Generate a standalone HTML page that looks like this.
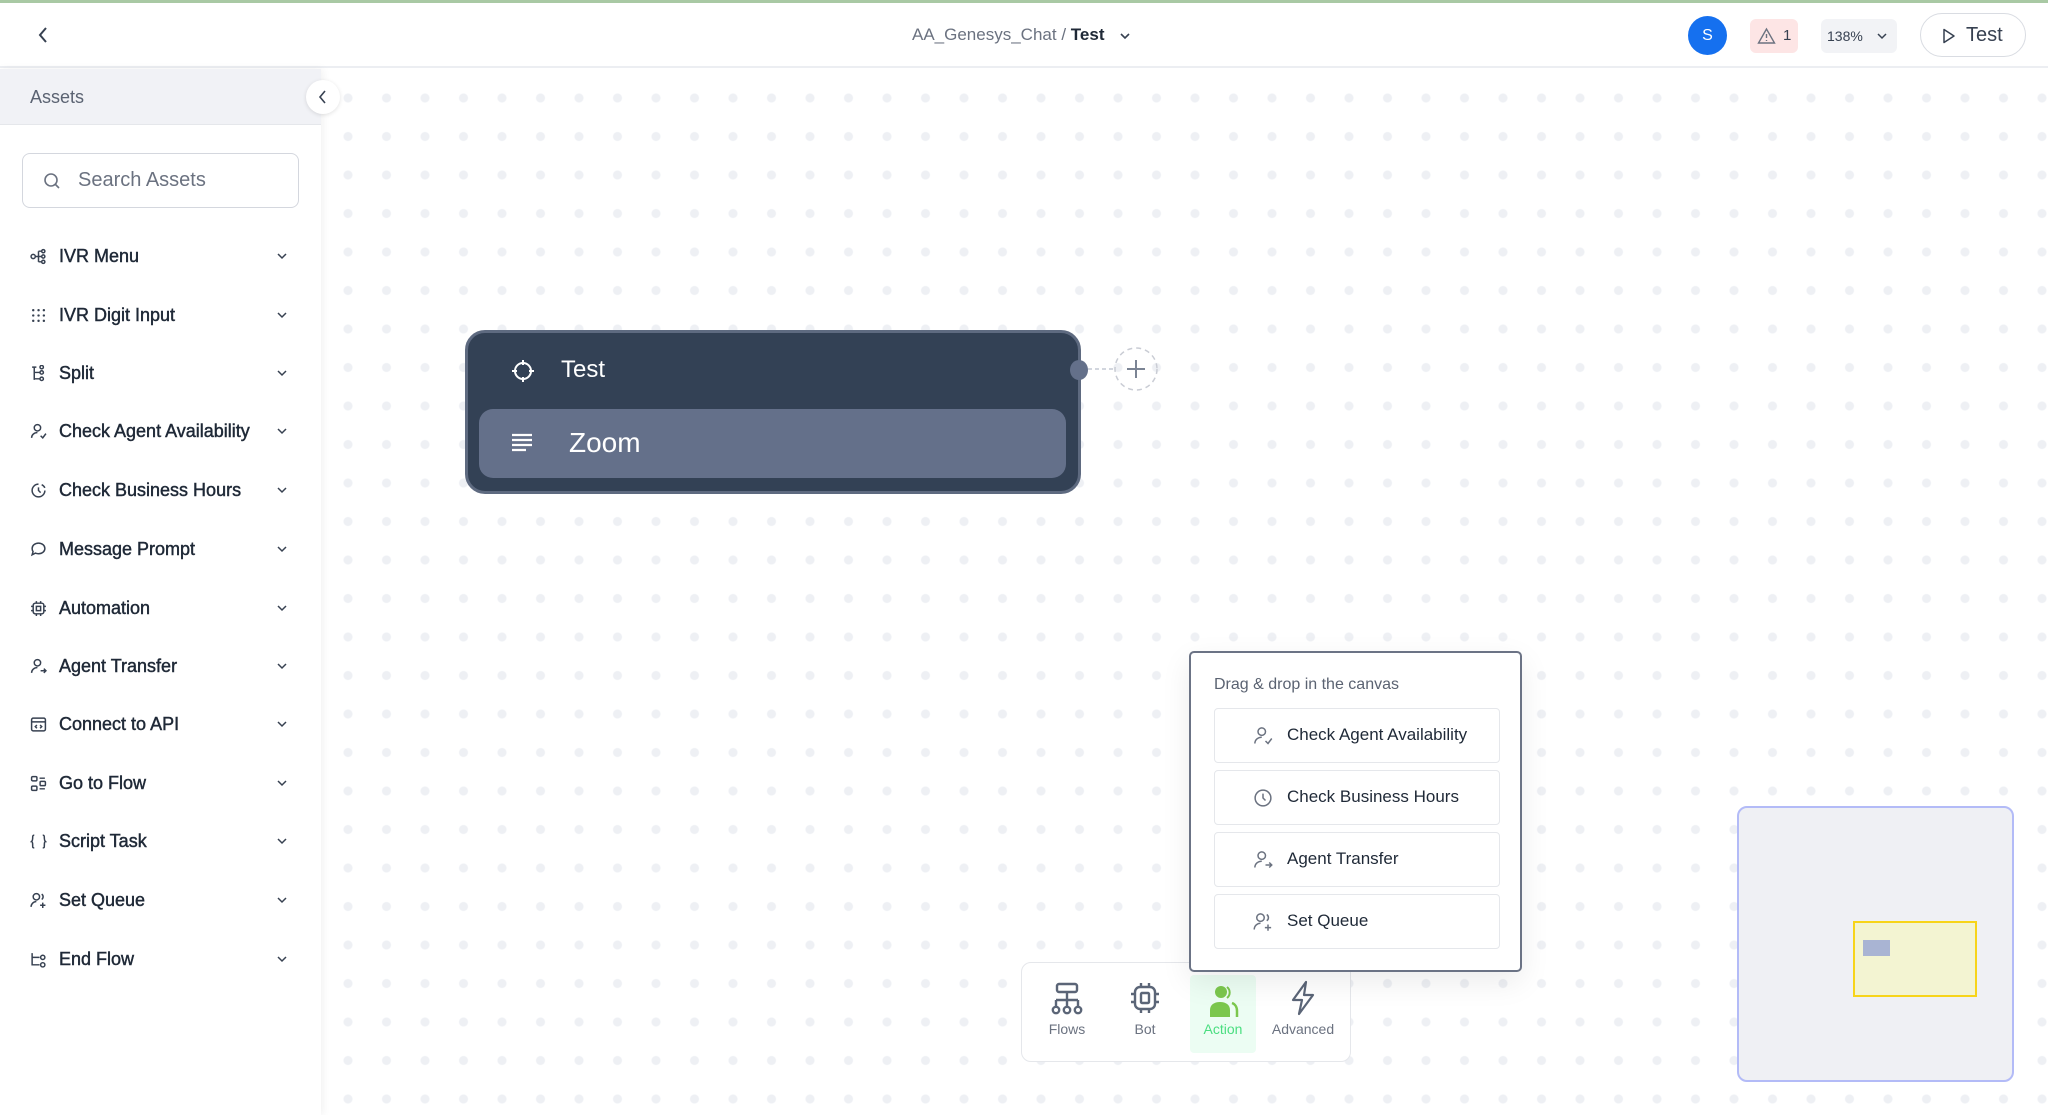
<!DOCTYPE html>
<html><head><meta charset="utf-8"><style>
*{box-sizing:border-box;margin:0;padding:0}
body{width:2048px;height:1115px;overflow:hidden;font-family:"Liberation Sans",sans-serif;background:#fff;position:relative;color:#1f2937}
.topline{position:absolute;left:0;top:0;width:2048px;height:3px;background:#a9c9a4}
.header{position:absolute;left:0;top:3px;width:2048px;height:65px;background:#fff;border-bottom:2px solid #eceef2}
.canvas{position:absolute;left:321px;top:69px;width:1727px;height:1046px;background-color:#fff;background-image:radial-gradient(circle,#eef0f4 4.2px,transparent 4.8px);background-size:38.5px 38.5px;background-position:7.75px 9.75px}
.sidebar{position:absolute;left:0;top:69px;width:321px;height:1046px;background:#fff;box-shadow:2px 0 8px rgba(0,0,0,0.06)}
.ahead{height:56px;background:#f1f2f6;border-bottom:1px solid #e5e7eb;padding-left:30px;line-height:56px;font-size:18px;color:#5b6372}
.search{position:absolute;left:22px;top:84px;width:277px;height:55px;border:1.5px solid #d4d7de;border-radius:8px}
.search span{position:absolute;left:55px;top:15px;font-size:20px;color:#6b7280}
.item{position:absolute;left:0;width:321px;height:30px}
.item .t{position:absolute;left:59px;top:4px;font-size:18px;color:#1f2937;-webkit-text-stroke:0.45px #1f2937}
.item svg.i{position:absolute;left:30px;top:6px}
.item svg.c{position:absolute;left:276px;top:9px}
.node{position:absolute;left:465px;top:330px;width:616px;height:164px;background:#334155;border:3px solid #5e6a80;border-radius:20px}
.pop{position:absolute;left:1189px;top:651px;width:333px;height:321px;background:#fff;border:2px solid #6b7385;border-radius:5px;box-shadow:0 10px 30px rgba(0,0,0,0.08)}
.pi{position:absolute;left:23px;width:286px;height:55px;border:1.5px solid #e5e7eb;border-radius:4px}
.pi span{position:absolute;left:72px;top:16px;font-size:17px;color:#1f2937}
.pi svg{position:absolute;left:38px;top:17px}
.tb{position:absolute;left:1021px;top:962px;width:330px;height:100px;background:#fff;border:1.5px solid #e5e7eb;border-radius:10px}
.tbi{position:absolute;top:0;width:66px;text-align:center}
.tbi div{font-size:14px;color:#6b7280;position:absolute;top:58px;width:100%}
</style></head><body>
<div class="canvas"></div>
<div class="topline"></div>
<div class="header">
<svg style="position:absolute;left:36px;top:22px" width="14" height="20" viewBox="0 0 14 20"><path d="M10 3L4 10l6 7" fill="none" stroke="#374151" stroke-width="2"/></svg>
<div style="position:absolute;left:912px;top:22px;font-size:17px;color:#6b7280">AA_Genesys_Chat <span style="color:#6b7280">/</span> <span style="color:#1f2937;font-weight:bold">Test</span></div>
<svg style="position:absolute;left:1119px;top:28px" width="12" height="10" viewBox="0 0 12 10"><path d="M2 3l4 4 4-4" fill="none" stroke="#374151" stroke-width="1.6"/></svg>
<div style="position:absolute;left:1688px;top:13px;width:39px;height:39px;border-radius:50%;background:#1570ef;color:#fff;font-size:16px;text-align:center;line-height:39px">S</div>
<div style="position:absolute;left:1750px;top:16px;width:48px;height:34px;border-radius:6px;background:#fde5e5"><svg style="position:absolute;left:7px;top:8px" width="19" height="18" viewBox="0 0 19 18"><path d="M9.5 2L1.5 16h16z" fill="none" stroke="#6b7280" stroke-width="1.4"/><path d="M9.5 7v4M9.5 13v1" stroke="#6b7280" stroke-width="1.4"/></svg><span style="position:absolute;left:33px;top:8px;font-size:15px;color:#374151">1</span></div>
<div style="position:absolute;left:1821px;top:16px;width:76px;height:34px;border-radius:6px;background:#f2f3f6"><span style="position:absolute;left:6px;top:9px;font-size:14px;color:#374151">138%</span><svg style="position:absolute;left:55px;top:12px" width="12" height="10" viewBox="0 0 12 10"><path d="M2 3l4 4 4-4" fill="none" stroke="#374151" stroke-width="1.5"/></svg></div>
<div style="position:absolute;left:1920px;top:10px;width:106px;height:44px;border-radius:22px;border:1.5px solid #d9dce2;background:#fff"><svg style="position:absolute;left:21px;top:14px" width="14" height="16" viewBox="0 0 14 16"><path d="M2 1.5v13l10-6.5z" fill="none" stroke="#374151" stroke-width="1.5" stroke-linejoin="round"/></svg><span style="position:absolute;left:45px;top:10px;font-size:20px;color:#374151">Test</span></div>
</div>
<div class="sidebar">
<div class="ahead">Assets</div>
<div class="search"><svg style="position:absolute;left:20px;top:18px" width="18" height="18" viewBox="0 0 18 18"><circle cx="8" cy="8" r="6" fill="none" stroke="#6b7280" stroke-width="1.6"/><path d="M12.5 12.5L16 16" stroke="#6b7280" stroke-width="1.6"/></svg><span>Search Assets</span></div>
</div>
<div style="position:absolute;left:306px;top:80px;width:34px;height:34px;border-radius:50%;background:#fff;box-shadow:0 1px 4px rgba(0,0,0,0.12)"><svg style="position:absolute;left:11px;top:9px" width="12" height="16" viewBox="0 0 12 16"><path d="M8 2L3 8l5 6" fill="none" stroke="#374151" stroke-width="1.6"/></svg></div>

<div id="items"></div>
<script>
var names=["IVR Menu","IVR Digit Input","Split","Check Agent Availability","Check Business Hours","Message Prompt","Automation","Agent Transfer","Connect to API","Go to Flow","Script Task","Set Queue","End Flow"];
var ic=[
'<circle cx="3" cy="8" r="2"/><path d="M5 8h3M8 3v10M8 3h3M8 8h3M8 13h3"/><circle cx="12.5" cy="3" r="1.5"/><circle cx="12.5" cy="8" r="1.5"/><circle cx="12.5" cy="13" r="1.5"/>',
'<g stroke-width="2.2" stroke-linecap="round"><path d="M3 3h.1M8 3h.1M13 3h.1M3 8h.1M8 8h.1M13 8h.1M3 13h.1M8 13h.1M13 13h.1"/></g>',
'<path d="M2 2h4M4 2v12M4 7h5M4 13h5"/><circle cx="11" cy="7" r="1.6"/><circle cx="11" cy="13" r="1.6"/><circle cx="11" cy="2" r="1.6"/>',
'<circle cx="7" cy="4.5" r="3"/><path d="M1.5 14c0-3 2.5-5 5.5-5"/><path d="M10 12l2 2 3-4"/>',
'<path d="M14 8A6 6 0 1 1 8 2"/><path d="M8 5v3l2 2"/><path d="M11 2.5a6 6 0 0 1 3 3"/>',
'<path d="M8 2c3.5 0 6 2.3 6 5s-2.5 5-6 5c-1 0-2-.2-2.8-.6L2 13l.9-3C2.3 9.1 2 8.1 2 7c0-2.7 2.5-5 6-5z"/>',
'<rect x="3" y="3" width="10" height="10" rx="2"/><rect x="6" y="6" width="4" height="4"/><path d="M1 6h2M1 10h2M13 6h2M13 10h2M6 1v2M10 1v2M6 13v2M10 13v2"/>',
'<circle cx="7" cy="4.5" r="3"/><path d="M1.5 14c0-3 2.5-5 5.5-5"/><path d="M10 12h5M13 10l2 2-2 2"/>',
'<rect x="1.5" y="2" width="13" height="12" rx="1.5"/><path d="M1.5 5.5h13M6.5 8.5l-1.5 1.5 1.5 1.5M9.5 8.5l1.5 1.5-1.5 1.5"/>',
'<rect x="1.5" y="1.5" width="5" height="4" rx="1"/><rect x="1.5" y="10.5" width="5" height="4" rx="1"/><rect x="9.5" y="6" width="5" height="4" rx="1"/><path d="M9 3h5M9 13h5"/>',
'<path d="M4 2c-1.5 0-1.5 1-1.5 3s-1 3-1 3 1 0 1 3 0 3 1.5 3M12 2c1.5 0 1.5 1 1.5 3s1 3 1 3-1 0-1 3 0 3-1.5 3"/>',
'<circle cx="6" cy="4.5" r="3"/><path d="M11 2a3 3 0 0 1 0 5M1 14c0-3 2.5-5 5-5M12 10v5M9.5 12.5h5"/>',
'<path d="M2 2v11h7M2 6h7"/><circle cx="12" cy="6" r="2"/><circle cx="12" cy="13" r="2"/>'
];
var ys=[257,316,374,432,491,550,609,667,725,784,842,901,960];
var h='';
for(var i=0;i<13;i++){h+='<div class="item" style="top:'+(ys[i]-15)+'px"><svg class="i" width="17" height="17" viewBox="0 0 16 16" fill="none" stroke="#374151" stroke-width="1.4">'+ic[i]+'</svg><span class="t">'+names[i]+'</span><svg class="c" width="12" height="10" viewBox="0 0 12 10"><path d="M2 3l4 4 4-4" fill="none" stroke="#374151" stroke-width="1.5"/></svg></div>';}
document.getElementById('items').innerHTML=h;
</script>

<div class="node">
<svg style="position:absolute;left:43px;top:26px" width="24" height="24" viewBox="0 0 24 24" fill="none" stroke="#fff" stroke-width="2"><circle cx="12" cy="12" r="8"/><path d="M12 1v5M12 18v5M1 12h5M18 12h5"/></svg>
<div style="position:absolute;left:93px;top:23px;font-size:24px;color:#fff">Test</div>
<div style="position:absolute;left:11px;top:76px;width:587px;height:69px;background:#64708a;border-radius:14px">
<svg style="position:absolute;left:32px;top:24px" width="22" height="20" viewBox="0 0 22 20" stroke="#fff" stroke-width="2.2"><path d="M1 2h20M1 7h20M1 12h20M1 17h14"/></svg>
<div style="position:absolute;left:90px;top:18px;font-size:28px;color:#fff">Zoom</div>
</div>
</div>
<div style="position:absolute;left:1070px;top:360px;width:18px;height:20px;border-radius:50%;background:#64708a"></div>
<svg style="position:absolute;left:1086px;top:345px" width="80" height="52" viewBox="0 0 80 52"><path d="M2 24h26" stroke="#c4c9d3" stroke-width="1.5" stroke-dasharray="4 3"/><circle cx="50" cy="24" r="21" fill="none" stroke="#c9ccd4" stroke-width="1.5" stroke-dasharray="5 4"/><path d="M50 15v18M41 24h18" stroke="#7b8494" stroke-width="2"/></svg>

<div class="tb">
<div class="tbi" style="left:12px"><svg style="position:absolute;left:17px;top:19px" width="32" height="34" viewBox="0 0 32 34" fill="none" stroke="#5b6577" stroke-width="2.4"><rect x="6" y="2" width="20" height="8" rx="2"/><path d="M16 10v8M5 18h22M5 18v6M16 18v6M27 18v6"/><circle cx="5" cy="28" r="3.2"/><circle cx="16" cy="28" r="3.2"/><circle cx="27" cy="28" r="3.2"/></svg><div>Flows</div></div>
<div class="tbi" style="left:90px"><svg style="position:absolute;left:17px;top:19px" width="32" height="32" viewBox="0 0 32 32" fill="none" stroke="#5b6577" stroke-width="2.4"><rect x="6" y="5" width="20" height="22" rx="5"/><rect x="12" y="11" width="8" height="10" rx="1"/><path d="M2 12h4M2 20h4M26 12h4M26 20h4M12 1v4M20 1v4M12 27v4M20 27v4"/></svg><div>Bot</div></div>
<div class="tbi" style="left:168px;top:12px;height:78px;background:#ecfdf3;border-radius:4px"><svg style="position:absolute;left:16px;top:9px" width="34" height="34" viewBox="0 0 34 34"><circle cx="15" cy="8" r="6" fill="#7bc74d"/><path d="M21 3a7 7 0 0 1 0 11" fill="none" stroke="#7bc74d" stroke-width="2"/><path d="M4 33v-7c0-5 4-8 10-8s10 3 10 8v7z" fill="#7bc74d"/><path d="M26 19c3 1 5 4 5 8v6" fill="none" stroke="#7bc74d" stroke-width="2.5"/></svg><div style="top:46px;color:#4ade80">Action</div></div>
<div class="tbi" style="left:248px"><svg style="position:absolute;left:20px;top:17px" width="26" height="36" viewBox="0 0 26 36" fill="none" stroke="#5b6577" stroke-width="2.2" stroke-linejoin="round"><path d="M16 2L3 20h9l-3 14 14-19h-9z"/></svg><div>Advanced</div></div>
</div>

<div class="pop">
<div style="position:absolute;left:23px;top:23px;font-size:16px;color:#5b6372">Drag &amp; drop in the canvas</div>
<div class="pi" style="top:55px"><svg width="20" height="20" viewBox="0 0 16 16" fill="none" stroke="#6b7280" stroke-width="1.2"><circle cx="7" cy="4.5" r="3"/><path d="M1.5 14c0-3 2.5-5 5.5-5"/><path d="M10 12l2 2 3-4"/></svg><span>Check Agent Availability</span></div>
<div class="pi" style="top:117px"><svg width="20" height="20" viewBox="0 0 16 16" fill="none" stroke="#6b7280" stroke-width="1.2"><circle cx="8" cy="8" r="6.3"/><path d="M8 4.5v3.5l2 2"/></svg><span>Check Business Hours</span></div>
<div class="pi" style="top:179px"><svg width="20" height="20" viewBox="0 0 16 16" fill="none" stroke="#6b7280" stroke-width="1.2"><circle cx="7" cy="4.5" r="3"/><path d="M1.5 14c0-3 2.5-5 5.5-5"/><path d="M10 12h5M13 10l2 2-2 2"/></svg><span>Agent Transfer</span></div>
<div class="pi" style="top:241px"><svg width="20" height="20" viewBox="0 0 16 16" fill="none" stroke="#6b7280" stroke-width="1.2"><circle cx="6" cy="4.5" r="3"/><path d="M11 2a3 3 0 0 1 0 5M1 14c0-3 2.5-5 5-5M12 10v5M9.5 12.5h5"/></svg><span>Set Queue</span></div>
</div>

<div style="position:absolute;left:1737px;top:806px;width:277px;height:276px;background:#eff0f4;border:2px solid #b3bbf7;border-radius:10px">
<div style="position:absolute;left:114px;top:113px;width:124px;height:76px;background:#f3f4d2;border:2px solid #f7d41a"></div>
<div style="position:absolute;left:124px;top:132px;width:27px;height:16px;background:#a9b4d3"></div>
</div>
</body></html>
